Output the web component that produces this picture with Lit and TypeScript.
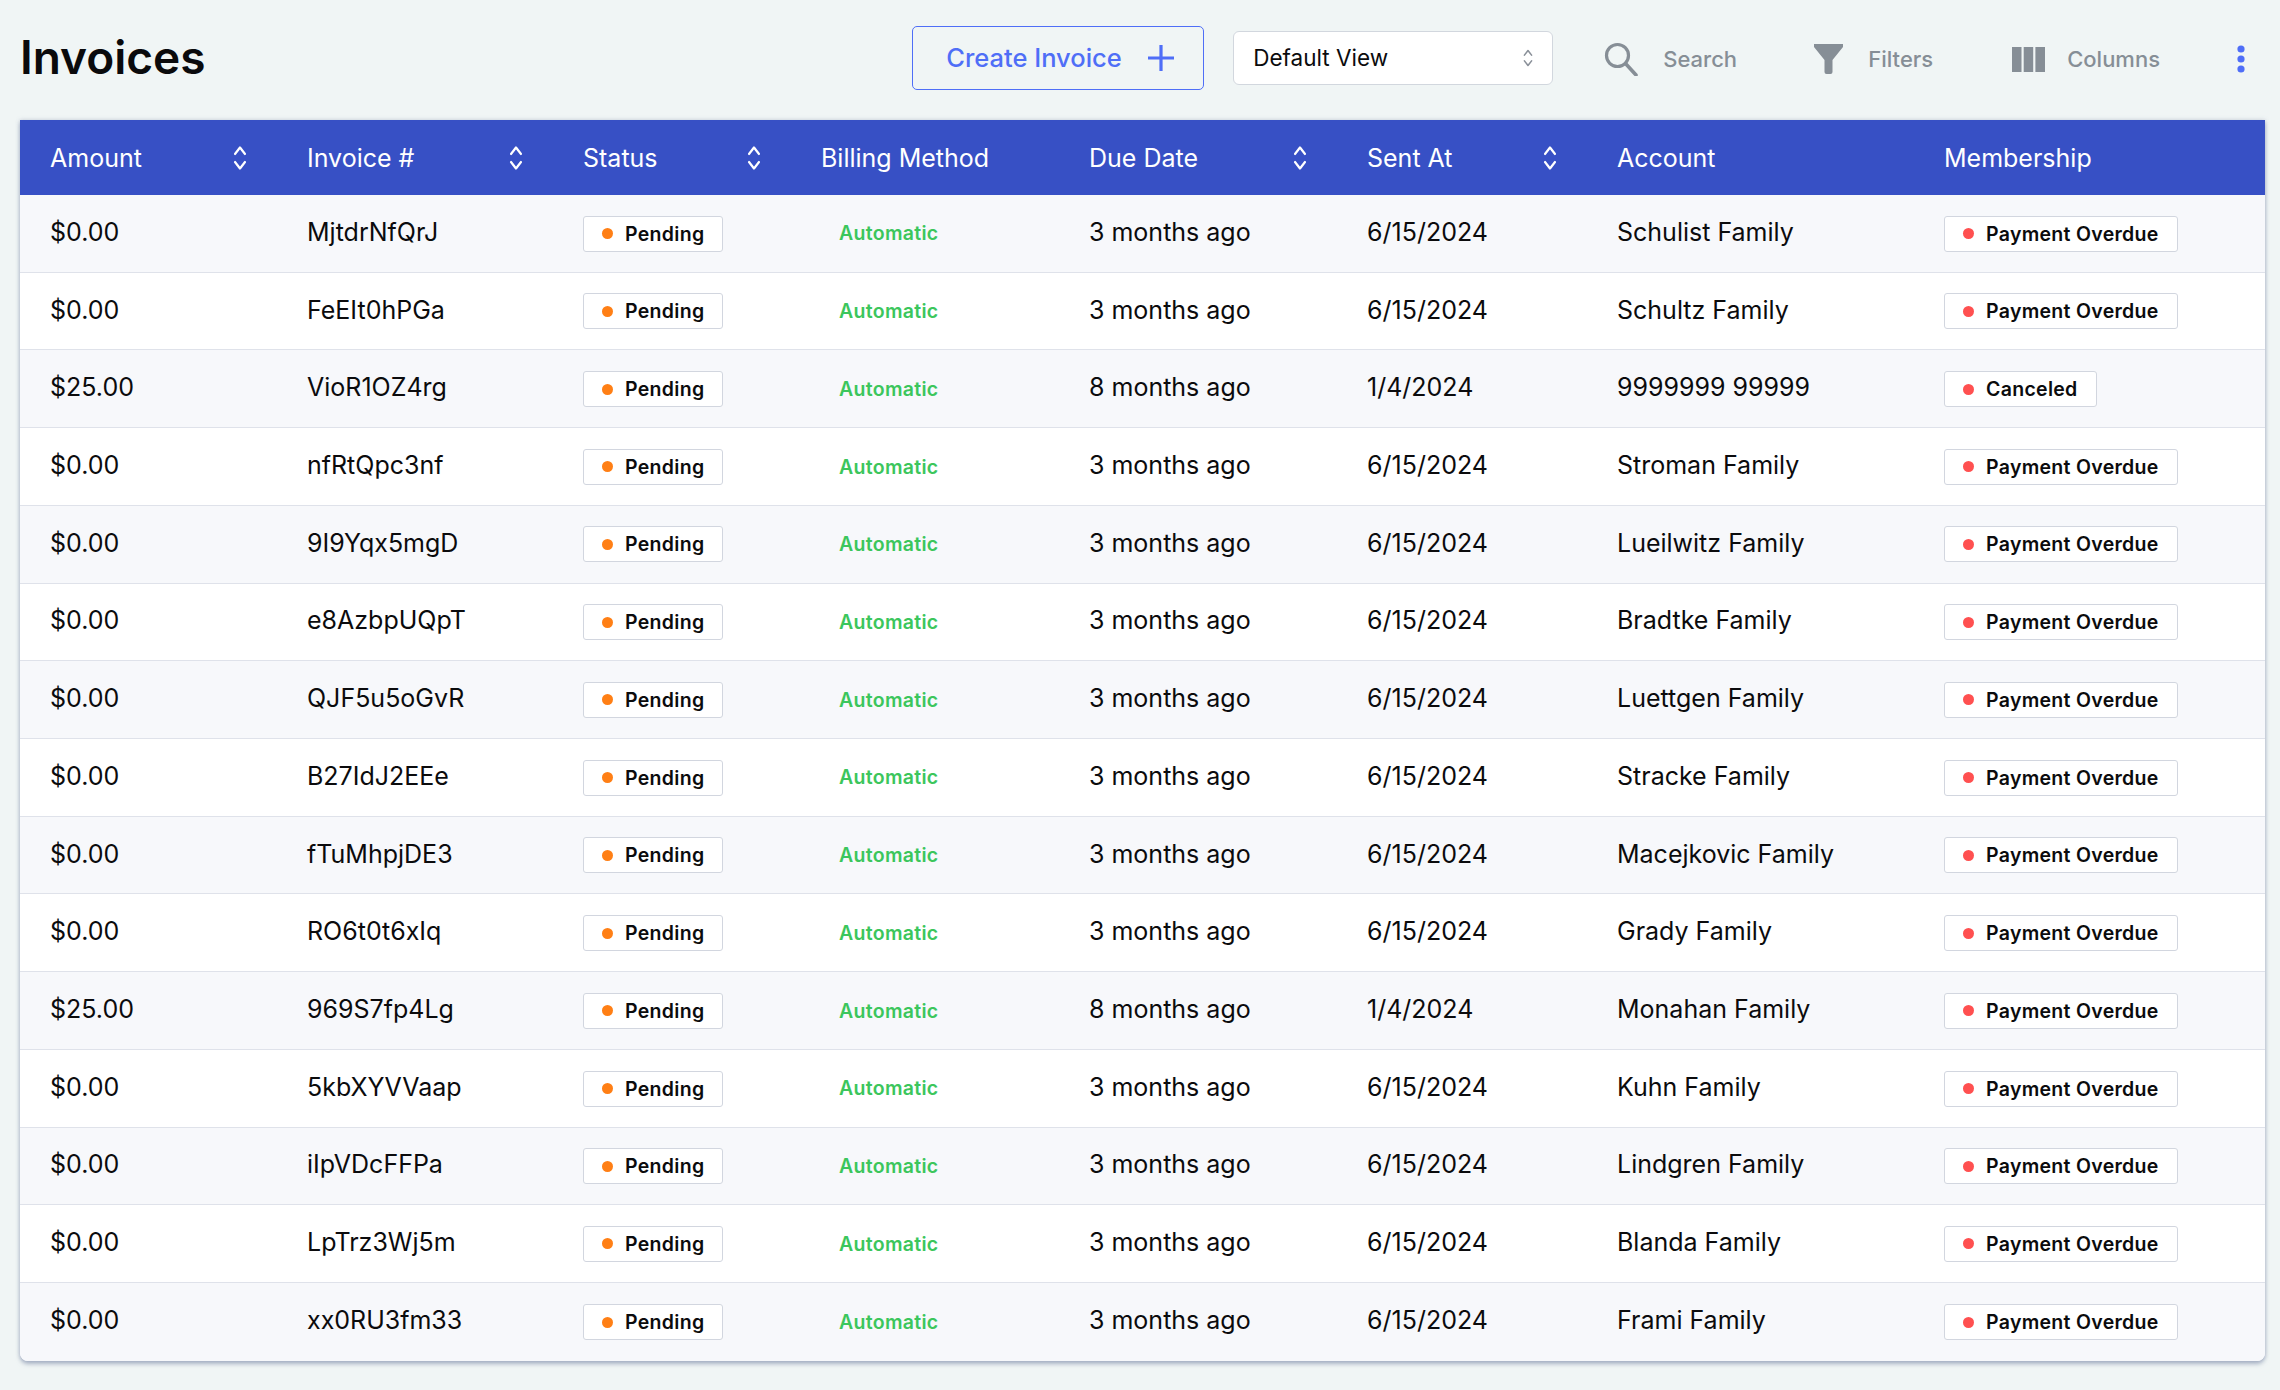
import { LitElement, html, css, svg } from "lit";
import { customElement } from "lit/decorators.js";

const D = ["3 months ago", "6/15/2024"];
const E = ["8 months ago", "1/4/2024"];
const rows: [string, string, string[], string, string][] = [
  ["$0.00", "MjtdrNfQrJ", D, "Schulist Family", "Payment Overdue"],
  ["$0.00", "FeEIt0hPGa", D, "Schultz Family", "Payment Overdue"],
  ["$25.00", "VioR1OZ4rg", E, "9999999 99999", "Canceled"],
  ["$0.00", "nfRtQpc3nf", D, "Stroman Family", "Payment Overdue"],
  ["$0.00", "9I9Yqx5mgD", D, "Lueilwitz Family", "Payment Overdue"],
  ["$0.00", "e8AzbpUQpT", D, "Bradtke Family", "Payment Overdue"],
  ["$0.00", "QJF5u5oGvR", D, "Luettgen Family", "Payment Overdue"],
  ["$0.00", "B27IdJ2EEe", D, "Stracke Family", "Payment Overdue"],
  ["$0.00", "fTuMhpjDE3", D, "Macejkovic Family", "Payment Overdue"],
  ["$0.00", "RO6t0t6xIq", D, "Grady Family", "Payment Overdue"],
  ["$25.00", "969S7fp4Lg", E, "Monahan Family", "Payment Overdue"],
  ["$0.00", "5kbXYVVaap", D, "Kuhn Family", "Payment Overdue"],
  ["$0.00", "iIpVDcFFPa", D, "Lindgren Family", "Payment Overdue"],
  ["$0.00", "LpTrz3Wj5m", D, "Blanda Family", "Payment Overdue"],
  ["$0.00", "xx0RU3fm33", D, "Frami Family", "Payment Overdue"],
];

const sortIcon = (cls: string) => html`<svg class=${cls} viewBox="0 0 14 28" fill="none" stroke="currentColor" stroke-width="2.2" stroke-linecap="round" stroke-linejoin="round">
  ${svg`<path d="M2 10 L7 3.5 L12 10"/><path d="M2 18 L7 24.5 L12 18"/>`}
</svg>`;

const heads: [string, boolean][] = [
  ["Amount", true],
  ["Invoice #", true],
  ["Status", true],
  ["Billing Method", false],
  ["Due Date", true],
  ["Sent At", true],
  ["Account", false],
  ["Membership", false],
];

@customElement("app-root")
export class AppRoot extends LitElement {
  static styles = css`
    :host {
      display: block;
      width: 2280px;
      height: 1390px;
      background: #f0f5f5;
      font-family: Inter, "Liberation Sans", sans-serif;
      color: #0b0b0d;
      overflow: hidden;
    }
    .toolbar {
      height: 120px;
      box-sizing: border-box;
      padding-left: 20px;
      display: flex;
      align-items: center;
    }
    h1 {
      margin: 0;
      font-size: 46px;
      font-weight: 600;
      line-height: 1;
      position: relative;
      top: -3px;
      color: #0a0a0c;
      flex: 1;
    }
    .create {
      box-sizing: border-box;
      width: 292px;
      height: 64px;
      margin-top: -5px;
      display: flex;
      align-items: center;
      padding-left: 33px;
      gap: 26px;
      border: 1.5px solid #4f6ef7;
      border-radius: 5px;
      color: #4f6ef7;
      font-size: 25.5px;
      font-weight: 500;
    }
    .create svg { width: 26px; height: 26px; }
    .select {
      box-sizing: border-box;
      width: 320px;
      height: 54px;
      margin-left: 29px;
      margin-top: -5px;
      padding: 0 19px;
      display: flex;
      align-items: center;
      justify-content: space-between;
      background: #fff;
      border: 1.5px solid #d2d7de;
      border-radius: 6px;
      font-size: 22.5px;
    }
    .select svg { width: 10px; height: 20px; color: #8a9099; }
    .tool {
      display: flex;
      align-items: center;
      color: #868e96;
      font-size: 22px;
      font-weight: 500;
      margin-top: -2px;
      height: 40px;
    }
    .search { margin-left: 51px; width: 129px; gap: 25px; }
    .filters { margin-left: 81px; gap: 25px; }
    .columns { margin-left: 79px; gap: 22px; }
    .search svg { width: 34px; height: 34px; flex: none; }
    .filters svg { width: 29px; height: 30px; flex: none; }
    .columns svg { width: 33px; height: 25px; flex: none; }
    .more {
      margin-left: 77px;
      margin-right: 35px;
      margin-top: -2px;
      width: 8px;
      height: 28px;
      color: #4f6ef7;
    }
    .card {
      width: 2245px;
      margin-left: 20px;
      border-radius: 0 0 8px 8px;
      box-shadow: 0 3px 4px rgba(120, 135, 165, 0.55), 0 0 4px rgba(120, 135, 165, 0.35);
      overflow: hidden;
      background: #fff;
    }
    .row {
      display: grid;
      grid-template-columns: 257px 276px 238px 268px 278px 250px 327px 351px;
      align-items: center;
      box-sizing: border-box;
      height: 77.73px;
      border-bottom: 1.5px solid #dfe2ea;
      font-size: 25px;
      background: #fff;
    }
    .row.odd { background: #f7f8fb; }
    .row:last-child { border-bottom: none; }
    .head {
      height: 75px;
      background: #3750c5;
      color: #fff;
      border: none;
      font-size: 25px;
    }
    .th {
      padding: 0 30px;
      display: flex;
      align-items: center;
      justify-content: space-between;
    }
    .th svg { width: 14px; height: 28px; margin-right: 0; }
    .th.w1 svg { margin-right: -0px; }
    .cell { padding-left: 30px; white-space: nowrap; margin-top: -3px; }
    .chipcell { padding-left: 30px; }
    .chip {
      display: inline-flex;
      align-items: center;
      box-sizing: border-box;
      height: 36px;
      padding: 0 18px;
      gap: 12px;
      background: #fff;
      border: 1.5px solid #d2d6df;
      border-radius: 3px;
      font-size: 19.5px;
      font-weight: 600;
      letter-spacing: 0.3px;
      color: #0b0b0d;
    }
    .dot { width: 11px; height: 11px; border-radius: 50%; }
    .dot.o { background: #ff7f15; }
    .dot.r { background: #ff5050; }
    .auto {
      padding-left: 48px;
      color: #3bc65c;
      font-size: 19.5px;
      font-weight: 600;
      letter-spacing: 0.3px;
    }
  `;

  render() {
    return html`
      <div class="toolbar">
        <h1>Invoices</h1>
        <div class="create">
          <span>Create Invoice</span>
          <svg viewBox="0 0 26 26" fill="none" stroke="currentColor" stroke-width="3.2"><path d="M13 0 V26 M0 13 H26" /></svg>
        </div>
        <div class="select">
          <span>Default View</span>
          ${sortIcon("")}
        </div>
        <div class="tool search">
          <svg viewBox="0 0 34 34" fill="none" stroke="currentColor"><circle cx="13.5" cy="13.5" r="11" stroke-width="3.2" /><path d="M21.5 21.5 L32 33" stroke-width="3.6" stroke-linecap="round" /></svg>
          <span>Search</span>
        </div>
        <div class="tool filters">
          <svg viewBox="0 0 29 30" fill="currentColor"><path d="M0 0 H29 V3 L18.5 16 V28 Q18.5 30 16.5 30 H12.5 Q10.5 30 10.5 28 V16 L0 3 Z" /></svg>
          <span>Filters</span>
        </div>
        <div class="tool columns">
          <svg viewBox="0 0 33 25" fill="currentColor"><rect x="0" width="9.5" height="25" /><rect x="11.7" width="9.5" height="25" /><rect x="23.4" width="9.6" height="25" /></svg>
          <span>Columns</span>
        </div>
        <svg class="more" viewBox="0 0 8 28" fill="currentColor"><circle cx="4" cy="4" r="3.6" /><circle cx="4" cy="14" r="3.6" /><circle cx="4" cy="24" r="3.6" /></svg>
      </div>
      <div class="card">
        <div class="row head">
          ${heads.map(([t, s]) => html`<div class="th"><span>${t}</span>${s ? sortIcon("") : ""}</div>`)}
        </div>
        ${rows.map(
          (r, i) => html`<div class="row ${i % 2 === 0 ? "odd" : ""}">
            <div class="cell">${r[0]}</div>
            <div class="cell">${r[1]}</div>
            <div class="chipcell"><span class="chip"><span class="dot o"></span>Pending</span></div>
            <div class="auto">Automatic</div>
            <div class="cell">${r[2][0]}</div>
            <div class="cell">${r[2][1]}</div>
            <div class="cell">${r[3]}</div>
            <div class="chipcell"><span class="chip"><span class="dot r"></span>${r[4]}</span></div>
          </div>`
        )}
      </div>
    `;
  }
}
